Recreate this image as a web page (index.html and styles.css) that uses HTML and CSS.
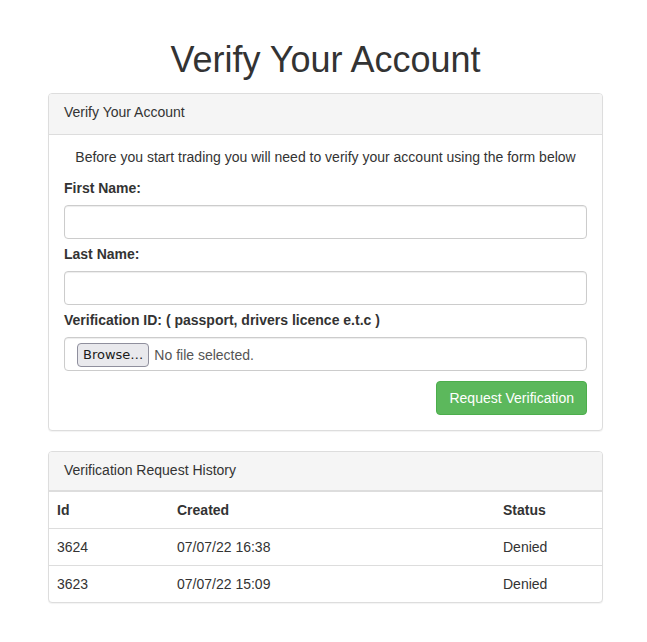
FILE: index.html
```html
<!DOCTYPE html>
<html>
<head>
<meta charset="utf-8">
<title>Verify Your Account</title>
<link rel="stylesheet" href="styles.css">
</head>
<body>
<div class="wrap">
  <h1 class="title">Verify Your Account</h1>

  <div class="panel">
    <div class="panel-heading">Verify Your Account</div>
    <div class="panel-body">
      <p class="intro">Before you start trading you will need to verify your account using the form below</p>
      <form class="form">
        <label class="label" for="fn">First Name:</label>
        <input class="input" id="fn" type="text">
        <label class="label" for="ln">Last Name:</label>
        <input class="input" id="ln" type="text">
        <label class="label">Verification ID: ( passport, drivers licence e.t.c )</label>
        <div class="input file">
          <span class="browse">Browse…</span>
          <span class="nofile">No file selected.</span>
        </div>
        <div class="actions">
          <button type="button" class="btn">Request Verification</button>
        </div>
      </form>
    </div>
  </div>

  <div class="panel">
    <div class="panel-heading panel-heading-table">Verification Request History</div>
    <table class="table">
      <tr><th class="c-id">Id</th><th class="c-created">Created</th><th class="c-status">Status</th></tr>
      <tr><td>3624</td><td>07/07/22 16:38</td><td>Denied</td></tr>
      <tr><td>3623</td><td>07/07/22 15:09</td><td>Denied</td></tr>
    </table>
  </div>
</div>
</body>
</html>
```

FILE: styles.css
```css
* { box-sizing: border-box; }
html, body { margin: 0; padding: 0; background: #fff; }
body {
  font-family: "Liberation Sans", Arial, Helvetica, sans-serif;
  font-size: 14px;
  line-height: 20px;
  color: #333;
}
.wrap {
  width: 555px;
  margin-left: 48px;
}
.title {
  margin: 0;
  padding-top: 40px;
  margin-bottom: 13px;
  font-size: 36px;
  line-height: 40px;
  font-weight: 500;
  text-align: center;
  color: #333;
}
.panel {
  border: 1px solid #ddd;
  border-radius: 4px;
  margin-bottom: 20px;
  box-shadow: 0 1px 1px rgba(0,0,0,.05);
  background: #fff;
}
.panel-heading {
  background: #f5f5f5;
  border-bottom: 1px solid #ddd;
  border-radius: 3px 3px 0 0;
  padding: 8px 15px 12px;
  color: #333;
}
.panel-heading-table {
  padding-bottom: 10px;
}
.panel-body {
  padding: 12px 15px 15px;
}
.intro {
  margin: 0 0 11px;
  text-align: center;
}
.form {
  display: flex;
  flex-direction: column;
}
.label {
  font-weight: bold;
  margin-bottom: 7px;
}
.input {
  display: block;
  width: 100%;
  height: 34px;
  border: 1px solid #ccc;
  border-radius: 4px;
  margin: 0 0 5px;
  padding: 6px 12px;
  font: inherit;
  box-shadow: inset 0 1px 1px rgba(0,0,0,.075);
  background: #fff;
}
.file {
  display: flex;
  align-items: center;
  gap: 5px;
  padding: 2px 12px 0;
  margin-bottom: 10px;
}
.browse {
  display: inline-block;
  height: 24px;
  line-height: 22px;
  padding: 0 5px;
  background: #e9e9ed;
  border: 1px solid #8f8f9d;
  border-radius: 4px;
  color: #1b1b1b;
  font-family: "DejaVu Sans", sans-serif;
  font-size: 13px;
}
.nofile {
  color: #555;
}
.actions {
  display: flex;
  justify-content: flex-end;
}
.btn {
  height: 34px;
  padding: 6px 12px;
  font: inherit;
  color: #fff;
  background: #5cb85c;
  border: 1px solid #4cae4c;
  border-radius: 4px;
}
.table {
  width: 100%;
  border-collapse: collapse;
  border-spacing: 0;
}
.table th, .table td {
  padding: 8px;
  text-align: left;
  border-top: 1px solid #ddd;
  vertical-align: top;
}
.table th { font-weight: bold; }
.c-id { width: 120px; }
.c-created { width: 326px; }
```
